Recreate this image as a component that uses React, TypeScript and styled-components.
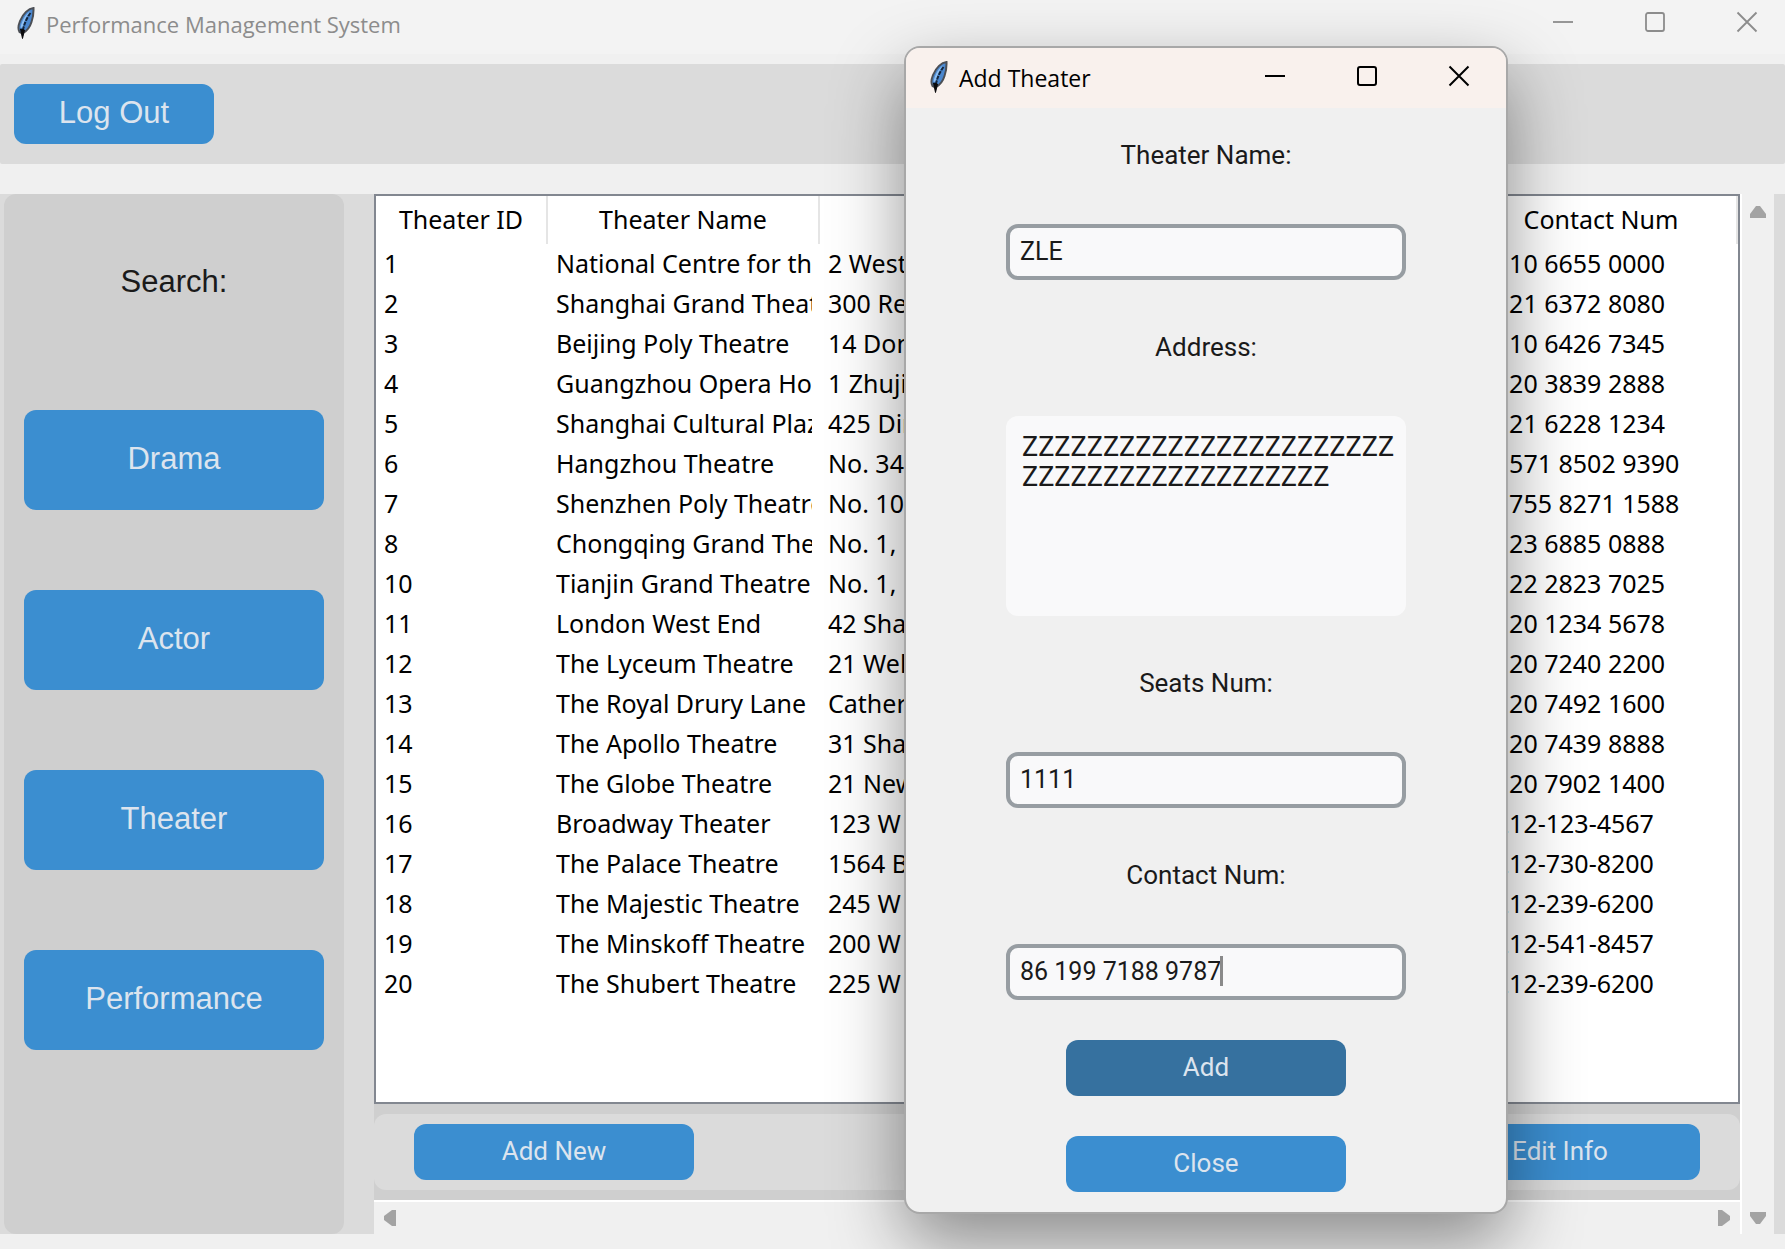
import React from "react";
import styled, { createGlobalStyle } from "styled-components";

const UI = `"Open Sans", "Noto Sans", sans-serif`;
const TABLE = `"Noto Sans", "Open Sans", sans-serif`;
const FORM = `Roboto, "Liberation Sans", sans-serif`;
const NAV = `"Liberation Sans", Arial, sans-serif`;

const GlobalStyle = createGlobalStyle`
  * { box-sizing: border-box; }
  body { margin: 0; background: #f0f0f0; }
  button, input, textarea { font: inherit; margin: 0; border: 0; }
`;

const Desktop = styled.div`
  position: relative;
  display: flex;
  flex-direction: column;
  min-height: 100vh;
  padding-bottom: 15px;
  overflow: hidden;
  background: #f0f0f0;
`;

const TitleBar = styled.header<{ $active?: boolean }>`
  display: flex;
  align-items: flex-start;
  height: ${(p) => (p.$active ? 60 : 54)}px;
  padding: ${(p) => (p.$active ? "6px 0 0 24px" : "0 0 0 17px")};
  background: ${(p) => (p.$active ? "#f9f1ed" : "#f3f3f3")};
  color: ${(p) => (p.$active ? "#000" : "#8c8c8c")};
`;

const Feather = styled.svg`
  width: 18px;
  height: 32px;
  margin: 7px 11px 0 0;
  flex: none;
`;

const TitleText = styled.h1<{ $active?: boolean }>`
  flex: 1;
  margin: 0;
  font: 400 ${(p) => (p.$active ? 23 : 22)}px/48px ${UI};
  white-space: nowrap;
`;

const Controls = styled.div<{ $active?: boolean }>`
  display: flex;
  margin-right: ${(p) => (p.$active ? 1 : -8)}px;
`;

const ControlButton = styled.button`
  display: grid;
  place-items: center;
  width: 92px;
  height: 44px;
  padding: 0;
  background: transparent;
  color: inherit;
`;

const TopBand = styled.div`
  margin: 10px 0 30px;
  padding: 20px 14px;
  background: #dbdbdb;
  border-radius: 2px;
`;

const BlueButton = styled.button<{ $size: "nav" | "top" | "form"; $hover?: boolean }>`
  display: block;
  width: ${(p) => ({ nav: 300, top: 200, form: 280 })[p.$size]}px;
  height: ${(p) => ({ nav: 100, top: 60, form: 56 })[p.$size]}px;
  padding: 0 0 2px;
  border-radius: 12px;
  background: ${(p) => (p.$hover ? "#36719f" : "#3b8ed0")};
  color: #dce4ee;
  font: ${(p) => (p.$size === "form" ? `400 26px/30px ${FORM}` : `400 31px/36px ${NAV}`)};
`;

const Main = styled.main`
  display: flex;
  flex: 1;
  background: #dbdbdb;
`;

const Sidebar = styled.nav`
  display: flex;
  flex-direction: column;
  align-items: center;
  gap: 80px;
  width: 340px;
  margin: 0 30px 0 4px;
  flex: none;
  padding-bottom: 40px;
  border-radius: 12px;
  background: #cfcfcf;
`;

const SidebarTitle = styled.h2`
  margin: 0;
  padding: 60px 0 20px;
  color: #1a1a1a;
  font: 400 31px/56px ${NAV};
`;

const Content = styled.section`
  display: flex;
  flex-direction: column;
  flex: 1;
  min-width: 0;
  background: #cfcfcf;
`;

const TableFrame = styled.div`
  flex: 1;
  border: 2px solid #828790;
  background: #fff;
  overflow: hidden;
`;

const Table = styled.table`
  width: 100%;
  table-layout: fixed;
  border-collapse: separate;
  border-spacing: 0;
  color: #000;
  font: 400 25px/38px ${TABLE};
`;

const Col = styled.col<{ $w?: number }>`
  width: ${(p) => (p.$w ? `${p.$w}px` : "auto")};
`;

const HeadCell = styled.th`
  height: 48px;
  padding: 0 0 2px;
  border-right: 2px solid #e5e5e5;
  font-weight: 400;
  text-align: center;
`;

const Cell = styled.td`
  height: 40px;
  padding: 0 8px 2px;
`;

const Clip = styled.div`
  overflow: hidden;
  height: 38px;
  white-space: nowrap;
`;

const ActionBar = styled.div`
  display: flex;
  justify-content: space-between;
  margin: 10px 0;
  padding: 10px 40px;
  border-radius: 12px;
  background: #dbdbdb;
`;

const HorizontalScroll = styled.div`
  display: flex;
  justify-content: space-between;
  align-items: center;
  height: 34px;
  padding: 0 10px;
  border-top: 2px solid #fff;
  background: #f0f0f0;
`;

const VerticalScroll = styled.div`
  display: flex;
  flex-direction: column;
  justify-content: space-between;
  align-items: center;
  width: 34px;
  margin-right: 11px;
  padding: 12px 0 10px;
  flex: none;
  border-left: 2px solid #fff;
  background: #f0f0f0;
`;

const ArrowButton = styled.button`
  display: grid;
  padding: 0;
  background: transparent;
`;

const Dialog = styled.section`
  position: absolute;
  left: 904px;
  top: 46px;
  width: 604px;
  border: 2px solid #a8a8a8;
  border-radius: 16px;
  background: #f0f0f0;
  overflow: hidden;
  box-shadow: 0 30px 72px rgba(0, 0, 0, 0.42);
`;

const Form = styled.form`
  display: flex;
  flex-direction: column;
  align-items: center;
  gap: 40px;
  padding: 20px 0;
`;

const Label = styled.label`
  padding-bottom: 2px;
  color: #1a1a1a;
  font: 400 26px/54px ${FORM};
`;

const Field = styled.div`
  position: relative;
  width: 400px;
`;

const TextInput = styled.input`
  display: block;
  width: 100%;
  height: 56px;
  padding: 0 10px 2px;
  border: 4px solid #979da2;
  border-radius: 12px;
  outline: 0;
  background: #f9f9fa;
  color: #1a1a1a;
  font: 400 25px/30px ${FORM};
`;

const Caret = styled.span`
  position: absolute;
  left: 214px;
  top: 12px;
  width: 3px;
  height: 30px;
  background: #8a8a8a;
`;

const TextArea = styled.textarea`
  display: block;
  width: 100%;
  height: 200px;
  padding: 16px 6px 16px 16px;
  border-radius: 12px;
  outline: 0;
  resize: none;
  overflow: hidden;
  background: #f9f9fa;
  color: #1a1a1a;
  font: 400 27px/30px ${FORM};
  word-break: break-all;
`;

const theaters: [number, string, string, string][] = [
  [1, "National Centre for th", "2 West", "86 10 6655 0000"],
  [2, "Shanghai Grand Theat", "300 Re", "86 21 6372 8080"],
  [3, "Beijing Poly Theatre", "14 Don", "86 10 6426 7345"],
  [4, "Guangzhou Opera Ho", "1 Zhuji", "86 20 3839 2888"],
  [5, "Shanghai Cultural Plaz", "425 Din", "86 21 6228 1234"],
  [6, "Hangzhou Theatre", "No. 34", "86 571 8502 9390"],
  [7, "Shenzhen Poly Theatre", "No. 10", "86 755 8271 1588"],
  [8, "Chongqing Grand The", "No. 1,", "86 23 6885 0888"],
  [10, "Tianjin Grand Theatre", "No. 1,", "86 22 2823 7025"],
  [11, "London West End", "42 Sha", "44 20 1234 5678"],
  [12, "The Lyceum Theatre", "21 Wel", "44 20 7240 2200"],
  [13, "The Royal Drury Lane", "Catheri", "44 20 7492 1600"],
  [14, "The Apollo Theatre", "31 Sha", "44 20 7439 8888"],
  [15, "The Globe Theatre", "21 New", "44 20 7902 1400"],
  [16, "Broadway Theater", "123 W", "1 212-123-4567"],
  [17, "The Palace Theatre", "1564 B", "1 212-730-8200"],
  [18, "The Majestic Theatre", "245 W", "1 212-239-6200"],
  [19, "The Minskoff Theatre", "200 W", "1 212-541-8457"],
  [20, "The Shubert Theatre", "225 W", "1 212-239-6200"],
];

const FeatherIcon = () => (
  <Feather viewBox="0 0 18 32" aria-hidden="true">
    <path d="M16.500 1C11.500 1.500 6 6.500 3 14c-2 5-2 8.500-.5 11l3 1.500C10 24 13 20 14.500 15c1.700-5 2.200-9.500 2-14z" fill="#4a87cf" stroke="#4c4f55" strokeWidth="2" />
    <path d="M13.500 4C9 7 5 13 3.500 20.500l2 .5C7 14 10 8 13.500 4z" fill="#8fc0f2" />
    <path d="M13.500 6C10.500 10 8 15 7 19l-1.500 5" fill="none" stroke="#14243a" strokeWidth="2" strokeDasharray="4 1" />
    <path d="M3.500 22L5.500 31.500 7.500 23z" fill="#0a0a0c" stroke="#0a0a0c" strokeWidth="1" />
  </Feather>
);

const WindowControls = ({ active }: { active?: boolean }) => {
  const line = { fill: "none", stroke: "currentColor", strokeWidth: active ? 2 : 1.8 };
  return (
    <Controls $active={active}>
      <ControlButton type="button" aria-label="Minimize">
        <svg width="22" height="22"><path d="M1 11H21" {...line} /></svg>
      </ControlButton>
      <ControlButton type="button" aria-label="Maximize">
        <svg width="22" height="22"><rect x="2" y="2" width="18" height="18" rx="2" {...line} /></svg>
      </ControlButton>
      <ControlButton type="button" aria-label="Close window">
        <svg width="22" height="22"><path d="M1.500 1.500l19 19M20.500 1.500l-19 19" {...line} /></svg>
      </ControlButton>
    </Controls>
  );
};

const arrows = {
  up: { w: 16, h: 12, d: "M6 0h4l6 8v4H0V8z" },
  down: { w: 16, h: 12, d: "M0 0h16v4l-6 8H6L0 4z" },
  left: { w: 12, h: 16, d: "M12 0v16H8L0 10V6l8-6z" },
  right: { w: 12, h: 16, d: "M0 0v16h4l8-6V6L4 0z" },
};

const Arrow = ({ dir }: { dir: keyof typeof arrows }) => (
  <ArrowButton type="button" aria-label={`Scroll ${dir}`}>
    <svg width={arrows[dir].w} height={arrows[dir].h}><path d={arrows[dir].d} fill="#a3a3a3" /></svg>
  </ArrowButton>
);

export default function App() {
  return (
    <Desktop>
      <GlobalStyle />
      <TitleBar>
        <FeatherIcon />
        <TitleText>Performance Management System</TitleText>
        <WindowControls />
      </TitleBar>
      <TopBand>
        <BlueButton type="button" $size="top">Log Out</BlueButton>
      </TopBand>
      <Main>
        <Sidebar>
          <SidebarTitle>Search:</SidebarTitle>
          {["Drama", "Actor", "Theater", "Performance"].map((name) => (
            <BlueButton key={name} type="button" $size="nav">{name}</BlueButton>
          ))}
        </Sidebar>
        <Content>
          <TableFrame>
            <Table>
              <colgroup>
                <Col $w={172} />
                <Col $w={272} />
                <Col />
                <Col $w={272} />
              </colgroup>
              <thead>
                <tr>
                  <HeadCell scope="col">Theater ID</HeadCell>
                  <HeadCell scope="col">Theater Name</HeadCell>
                  <HeadCell scope="col" aria-label="Address" />
                  <HeadCell scope="col">Contact Num</HeadCell>
                </tr>
              </thead>
              <tbody>
                {theaters.map((row) => (
                  <tr key={row[0]}>
                    {row.map((value, i) => (
                      <Cell key={i}><Clip>{value}</Clip></Cell>
                    ))}
                  </tr>
                ))}
              </tbody>
            </Table>
          </TableFrame>
          <ActionBar>
            <BlueButton type="button" $size="form">Add New</BlueButton>
            <BlueButton type="button" $size="form">Edit Info</BlueButton>
          </ActionBar>
          <HorizontalScroll>
            <Arrow dir="left" />
            <Arrow dir="right" />
          </HorizontalScroll>
        </Content>
        <VerticalScroll>
          <Arrow dir="up" />
          <Arrow dir="down" />
        </VerticalScroll>
      </Main>
      <Dialog role="dialog" aria-labelledby="dialog-title">
        <TitleBar $active>
          <FeatherIcon />
          <TitleText id="dialog-title" as="h2" $active>Add Theater</TitleText>
          <WindowControls active />
        </TitleBar>
        <Form onSubmit={(e) => e.preventDefault()}>
          <Label htmlFor="name">Theater Name:</Label>
          <Field><TextInput id="name" defaultValue="ZLE" /></Field>
          <Label htmlFor="address">Address:</Label>
          <Field><TextArea id="address" spellCheck={false} defaultValue={"Z".repeat(42)} /></Field>
          <Label htmlFor="seats">Seats Num:</Label>
          <Field><TextInput id="seats" defaultValue="1111" /></Field>
          <Label htmlFor="contact">Contact Num:</Label>
          <Field>
            <TextInput id="contact" defaultValue="86 199 7188 9787" />
            <Caret />
          </Field>
          <BlueButton type="submit" $size="form" $hover>Add</BlueButton>
          <BlueButton type="button" $size="form">Close</BlueButton>
        </Form>
      </Dialog>
    </Desktop>
  );
}
